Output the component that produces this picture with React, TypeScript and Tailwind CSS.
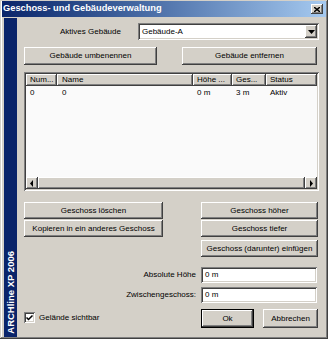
import React from "react";

const raised =
  "bg-[#d4d0c8] shadow-[inset_-1px_-1px_#404040,inset_1px_1px_#ffffff,inset_-2px_-2px_#808080,inset_2px_2px_#d4d0c8]";
const sunken =
  "shadow-[inset_1px_1px_#808080,inset_-1px_-1px_#ffffff,inset_2px_2px_#404040,inset_-2px_-2px_#d4d0c8]";

function Btn({ label, className = "" }: { label: string; className?: string }) {
  return (
    <div className={`${raised} flex items-center justify-center leading-none ${className}`}>
      {label}
    </div>
  );
}

function Field({ value, className = "" }: { value: string; className?: string }) {
  return (
    <div className={`bg-white ${sunken} flex items-center pl-[4px] leading-none ${className}`}>
      {value}
    </div>
  );
}

function ArrowLeft() {
  return (
    <svg width="4" height="7" viewBox="0 0 4 7">
      <path d="M3 0 L3 7 L0 3.5 Z" fill="#000" />
    </svg>
  );
}
function ArrowRight() {
  return (
    <svg width="4" height="7" viewBox="0 0 4 7">
      <path d="M1 0 L1 7 L4 3.5 Z" fill="#000" />
    </svg>
  );
}

const cols = [
  { label: "Num...", w: "w-[31px]", pl: "pl-[4px]" },
  { label: "Name", w: "w-[136px]", pl: "pl-[5px]" },
  { label: "Höhe ...", w: "w-[39px]", pl: "pl-[4px]" },
  { label: "Ges...", w: "w-[34px]", pl: "pl-[4px]" },
  { label: "Status", w: "flex-1", pl: "pl-[4px]" },
];
const row = ["0", "0", "0 m", "3 m", "Aktiv"];

export default function App() {
  return (
    <div className="w-[328px] h-[339px] overflow-hidden bg-[#d4d0c8] text-black text-[8px] font-['Liberation_Sans',Arial,sans-serif] flex flex-col pt-[1px] px-[2px] pb-[2px] shadow-[inset_-1px_-1px_#404040,inset_1px_1px_#d4d0c8,inset_-2px_-2px_#808080,inset_2px_2px_#ffffff]">
      {/* Title bar */}
      <div className="h-[16px] shrink-0 flex items-center bg-gradient-to-r from-[#0a246a] to-[#a6caf0] pl-[1px] pr-[3px]">
        <span className="font-bold text-white text-[9.3px] leading-none">
          Geschoss- und Gebäudeverwaltung
        </span>
        <div className={`${raised} ml-auto w-[12px] h-[10px] flex items-center justify-center`}>
          <svg width="6" height="5" viewBox="0 0 6 5">
            <path d="M0 0 L6 5 M6 0 L0 5" stroke="#000" strokeWidth="1.4" />
          </svg>
        </div>
      </div>

      {/* Body */}
      <div className="flex flex-1">
        {/* Left strip */}
        <div className="w-[13px] ml-[2px] mt-[1px] bg-[#0a246a] flex flex-col justify-end items-center pb-[3px]">
          <span className="[writing-mode:vertical-rl] rotate-180 text-white font-bold text-[9.5px] leading-none whitespace-nowrap">
            ARCHline XP 2006
          </span>
        </div>

        {/* Content */}
        <div className="ml-[7px] w-[295px] flex flex-col">
          {/* Aktives Gebäude */}
          <div className="mt-[6px] h-[17px] flex items-center">
            <span className="pl-[36px] leading-none">Aktives Gebäude</span>
            <div className={`ml-auto w-[181px] h-[17px] bg-white ${sunken} flex items-center pl-[4px] pr-[2px] py-[2px]`}>
              <span className="leading-none">Gebäude-A</span>
              <div className={`${raised} ml-auto w-[12px] h-[13px] flex items-center justify-center`}>
                <svg width="7" height="4" viewBox="0 0 7 4">
                  <path d="M0 0 L7 0 L3.5 4 Z" fill="#000" />
                </svg>
              </div>
            </div>
          </div>

          {/* Gebäude buttons */}
          <div className="mt-[7px] h-[18px] flex">
            <Btn label="Gebäude umbenennen" className="w-[133px]" />
            <Btn label="Gebäude entfernen" className="ml-auto mr-[2px] w-[135px]" />
          </div>

          {/* List */}
          <div className={`mt-[7px] h-[119px] bg-[#fafafa] ${sunken} p-[2px] flex flex-col`}>
            <div className="h-[12px] flex">
              {cols.map((c, i) => (
                <div
                  key={i}
                  className={`${c.w} ${c.pl} ${raised} flex items-center leading-none whitespace-nowrap overflow-hidden`}
                >
                  {c.label}
                </div>
              ))}
            </div>
            <div className="h-[11px] mt-[1px] flex items-center">
              {cols.map((c, i) => (
                <div key={i} className={`${c.w} ${c.pl} leading-none`}>
                  {row[i]}
                </div>
              ))}
            </div>
            <div className="flex-1" />
            {/* Horizontal scrollbar */}
            <div className="h-[12px] flex bg-[#e8e6e2]">
              <div className={`${raised} w-[12px] flex items-center justify-center`}>
                <ArrowLeft />
              </div>
              <div className={`${raised} flex-1`} />
              <div className={`${raised} w-[12px] flex items-center justify-center`}>
                <ArrowRight />
              </div>
            </div>
          </div>

          {/* Geschoss buttons */}
          <div className="mt-[11px] h-[17px] flex">
            <Btn label="Geschoss löschen" className="w-[139px]" />
            <Btn label="Geschoss höher" className="ml-auto mr-[1px] w-[117px]" />
          </div>
          <div className="mt-[1px] h-[17px] flex">
            <Btn label="Kopieren in ein anderes Geschoss" className="w-[139px]" />
            <Btn label="Geschoss tiefer" className="ml-auto mr-[1px] w-[117px]" />
          </div>
          <div className="mt-[3px] h-[17px] flex">
            <Btn label="Geschoss (darunter) einfügen" className="ml-auto mr-[1px] w-[117px]" />
          </div>

          {/* Inputs */}
          <div className="mt-[10px] h-[16px] flex items-center">
            <span className="flex-1 text-right pr-[5px] leading-none">Absolute Höhe</span>
            <Field value="0 m" className="w-[116px] h-[16px] mr-[2px]" />
          </div>
          <div className="mt-[4px] h-[16px] flex items-center">
            <span className="flex-1 text-right pr-[5px] leading-none">Zwischengeschoss:</span>
            <Field value="0 m" className="w-[116px] h-[16px] mr-[2px]" />
          </div>

          {/* Bottom row */}
          <div className="mt-[6px] h-[19px] flex items-center">
            <div className="flex items-center gap-[4px] mb-[2px]">
              <div className={`w-[11px] h-[11px] bg-white ${sunken} flex items-center justify-center`}>
                <svg width="7" height="6" viewBox="0 0 7 6">
                  <path d="M0.5 2.5 L2.5 4.5 L6.5 0.5" stroke="#000" strokeWidth="1.5" fill="none" />
                </svg>
              </div>
              <span className="leading-none">Gelände sichtbar</span>
            </div>
            <div className="ml-auto mr-[1px] flex gap-[9px] h-[19px]">
              <div className="w-[53px] h-[19px] border border-black">
                <div className={`${raised} w-full h-full flex items-center justify-center leading-none`}>
                  Ok
                </div>
              </div>
              <Btn label="Abbrechen" className="w-[55px] h-[19px]" />
            </div>
          </div>
        </div>
      </div>
    </div>
  );
}
